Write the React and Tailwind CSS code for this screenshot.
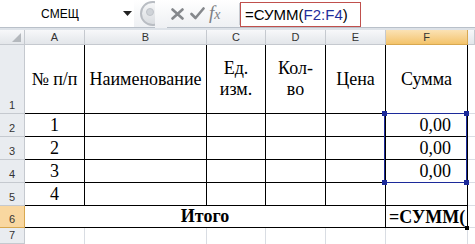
import React from "react";

const SERIF = "font-['Liberation_Serif','Times_New_Roman',serif]";

export default function App() {
  const hdr = "flex items-center justify-center border-r border-b border-[#c5c9cf] bg-gradient-to-b from-[#f7f8fa] to-[#e3e6ea] text-[11px] text-[#333] leading-none";
  const rowHdr = "flex items-end justify-center border-r border-b border-[#c5c9cf] bg-[#e9ecf0] text-[11px] text-[#333] leading-none pb-[2px]";
  const cell = `${SERIF} border-r border-b border-black flex items-center justify-center text-[18px] text-black leading-[21px]`;
  const cols = "grid grid-cols-[25px_60px_122px_59px_60px_60px_82px_1fr]";

  return (
    <div className="w-[475px] h-[244px] overflow-hidden bg-white relative font-['Liberation_Sans',Arial,sans-serif]">
      {/* Formula bar */}
      <div className="h-[28px] flex items-stretch border-b border-[#b9c0c9] bg-white">
        <div className="w-[134px] flex items-center relative">
          <span className="w-[120px] text-center text-[12px] text-black">СМЕЩ</span>
          <svg width="9" height="6" viewBox="0 0 9 6" className="absolute left-[123px] top-[11px]"><path d="M0 0 L9 0 L4.5 5 Z" fill="#222" /></svg>
        </div>
        <div className="w-[106px] flex items-center relative bg-gradient-to-b from-[#ffffff] to-[#eef0f3]">
          <div className="absolute left-[6px] top-[1px] w-[26px] h-[25px] rounded-full border-2 border-[#b9bdc3] bg-gradient-to-b from-[#f6f7f8] to-[#d9dce0] flex items-center justify-center">
            <div className="w-[8px] h-[8px] rounded-full bg-[#cfd3d8] border border-[#bfc3c9] -translate-x-[3px] -translate-y-[2px]" />
          </div>
          <div className="absolute left-[21px] top-0 w-[12px] h-[28px] bg-gradient-to-b from-[#ffffff] to-[#eef0f3]" />
          <svg width="13" height="12" viewBox="0 0 13 12" className="absolute left-[37px] top-[8px]">
            <path d="M1.5 1.5 L11.5 10.5 M11.5 1.5 L1.5 10.5" stroke="#85888c" strokeWidth="2.6" strokeLinecap="round" />
          </svg>
          <svg width="15" height="13" viewBox="0 0 15 13" className="absolute left-[56px] top-[7px]">
            <path d="M1.5 7 L5.5 11 L13.5 1.5" stroke="#85888c" strokeWidth="2.6" fill="none" strokeLinecap="round" strokeLinejoin="round" />
          </svg>
          <span className={`${SERIF} absolute left-[75px] top-[2px] text-[19px] italic text-[#7d8084] leading-[22px]`}>f<span className="text-[14px]">x</span></span>
          <div className="absolute right-0 top-[3px] w-px h-[22px] bg-[#c8ccd2]" />
        </div>
        <div className="flex items-center">
          <div className="h-[25px] w-[121px] border border-[#c0504d] flex items-center pl-[4px] text-[15px] text-black leading-none mt-[1px]">
            =СУММ(<span className="text-[#1f2e9c]">F2:F4</span>)
          </div>
        </div>
      </div>
      <div className="h-[2px] bg-[#dde2e8]" />

      {/* Sheet */}
      <div className="relative">
        <div className={`${cols} grid-rows-[15px_69px_23px_23px_23px_23px_22px_16px]`}>
          {/* header row */}
          <div className={`${hdr} relative`}>
            <svg width="9" height="9" viewBox="0 0 9 9" className="absolute right-[3px] bottom-[2px]"><path d="M9 0 L9 9 L0 9 Z" fill="#b4b8bd" /></svg>
          </div>
          <div className={hdr}>A</div>
          <div className={hdr}>B</div>
          <div className={hdr}>C</div>
          <div className={hdr}>D</div>
          <div className={hdr}>E</div>
          <div className="flex items-center justify-center border-r border-b border-[#d8a850] bg-gradient-to-b from-[#fbe2b4] to-[#f3c36a] text-[11px] text-[#333] leading-none">F</div>
          <div className={hdr} />

          {/* row 1 */}
          <div className={rowHdr}>1</div>
          <div className={cell}>№ п/п</div>
          <div className={cell}>Наименование</div>
          <div className={`${cell} text-center`}>Ед.<br />изм.</div>
          <div className={`${cell} text-center`}>Кол-<br />во</div>
          <div className={cell}>Цена</div>
          <div className={cell}>Сумма</div>
          <div className="border-b border-[#d9dde3]" />

          {[1, 2, 3, 4].map((n) => (
            <React.Fragment key={n}>
              <div className={rowHdr}>{n + 1}</div>
              <div className={cell}>{n}</div>
              <div className={cell} />
              <div className={cell} />
              <div className={cell} />
              <div className={cell} />
              <div className={`${cell} justify-end pr-[16px]`}>{n < 4 ? "0,00" : ""}</div>
              <div className="border-b border-[#d9dde3]" />
            </React.Fragment>
          ))}

          {/* row 6 */}
          <div className="flex items-end justify-center border-r border-b border-[#d8a850] bg-[#f9d7a0] text-[11px] text-[#333] leading-none pb-[2px]">6</div>
          <div className={`${cell} col-span-5 font-bold`}>Итого</div>
          <div className="border-b border-black relative bg-white">
            <div className={`${SERIF} absolute left-[-1px] top-[-1px] right-0 bottom-[-1px] border border-black bg-white flex items-center pl-[3px] text-[18px] font-bold text-black leading-none overflow-hidden whitespace-nowrap`}>=СУММ(</div>
            <div className="absolute right-[-1px] bottom-[-3px] w-[4px] h-[4px] bg-black" />
          </div>
          <div className="border-b border-[#d9dde3]" />

          {/* row 7 */}
          <div className={rowHdr}>7</div>
          <div className="border-r border-[#d9dde3]" />
          <div className="border-r border-[#d9dde3]" />
          <div className="border-r border-[#d9dde3]" />
          <div className="border-r border-[#d9dde3]" />
          <div className="border-r border-[#d9dde3]" />
          <div className="border-r border-[#d9dde3]" />
          <div />
        </div>

        {/* selection F2:F4 */}
        <div className="absolute left-[384px] top-[83px] w-[83px] h-[70px] border border-[#1c2a9a] pointer-events-none">
          <div className="absolute left-[-3px] top-[-3px] w-[5px] h-[5px] bg-[#1c2a9a]" />
          <div className="absolute right-[-3px] top-[-3px] w-[5px] h-[5px] bg-[#1c2a9a]" />
          <div className="absolute left-[-3px] bottom-[-3px] w-[5px] h-[5px] bg-[#1c2a9a]" />
          <div className="absolute right-[-3px] bottom-[-3px] w-[5px] h-[5px] bg-[#1c2a9a]" />
        </div>
      </div>
    </div>
  );
}
